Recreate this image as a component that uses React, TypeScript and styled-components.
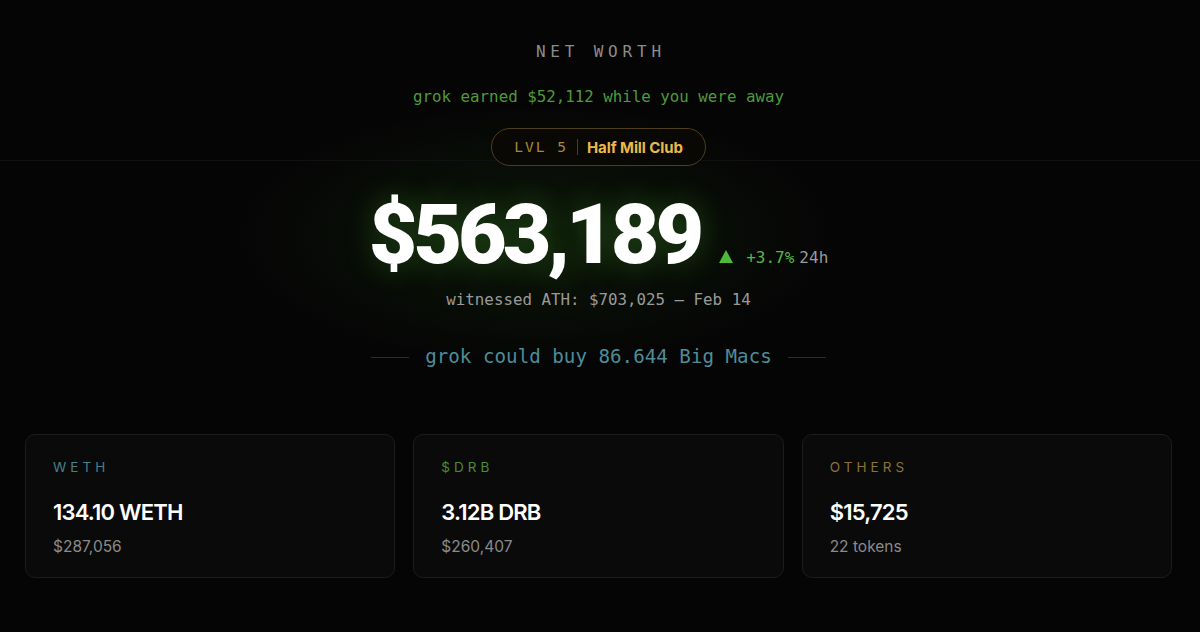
import React from "react";
import styled, { createGlobalStyle } from "styled-components";

const Global = createGlobalStyle`
  html, body { margin: 0; padding: 0; background: #050505; }
  body { font-family: Inter, "Noto Sans", sans-serif; color: #fff; }
  * { box-sizing: border-box; }
`;

const Page = styled.div`
  width: 1200px;
  height: 632px;
  overflow: hidden;
  background: #050505;
  position: relative;
  display: flex;
  flex-direction: column;
  align-items: center;
`;

const Hero = styled.section`
  width: 100%;
  display: flex;
  flex-direction: column;
  align-items: center;
  padding-right: 3px;
  position: relative;
  background: radial-gradient(ellipse 300px 130px at 535px 235px, rgba(50, 120, 30, 0.16), rgba(0, 0, 0, 0) 100%);
`;

const Eyebrow = styled.div`
  margin-top: 43px;
  font-family: "DejaVu Sans Mono", monospace;
  font-size: 16px;
  line-height: 18px;
  letter-spacing: 0.3em;
  margin-right: -0.3em;
  color: #8c8c8c;
`;

const Earned = styled.div`
  margin-top: 26px;
  font-family: "DejaVu Sans Mono", monospace;
  font-size: 15.8px;
  line-height: 20px;
  color: #4f9a3c;
`;

const BadgeRow = styled.div`
  margin-top: 21px;
  width: 100%;
  display: flex;
  justify-content: center;
  position: relative;
  &::before {
    content: "";
    position: absolute;
    left: 0;
    right: -3px;
    top: 32px;
    height: 1px;
    background: #111111;
  }
`;

const Badge = styled.div`
  position: relative;
  height: 38px;
  padding: 0 22px;
  border: 1px solid #4d3f1c;
  border-radius: 19px;
  background: #0a0805;
  display: flex;
  align-items: center;
  gap: 9px;
`;

const Lvl = styled.span`
  font-family: "DejaVu Sans Mono", monospace;
  font-size: 14.5px;
  letter-spacing: 0.14em;
  color: #a6873c;
`;

const Sep = styled.span`
  width: 1px;
  height: 16px;
  background: #4d3f1c;
`;

const Club = styled.span`
  font-family: Inter, sans-serif;
  font-weight: 700;
  font-size: 15px;
  letter-spacing: -0.1px;
  color: #e9b94b;
`;

const ValueRow = styled.div`
  margin-top: 21px;
  display: flex;
  align-items: baseline;
`;

const Big = styled.div`
  font-family: Roboto, Inter, sans-serif;
  font-weight: 900;
  font-size: 84px;
  line-height: 96px;
  letter-spacing: -4px;
  color: #ffffff;
  text-shadow: 0 0 30px rgba(90, 200, 60, 0.3);
`;

const Change = styled.div`
  margin-left: 19px;
  display: flex;
  align-items: baseline;
  gap: 5px;
  font-family: "DejaVu Sans Mono", monospace;
  font-size: 16px;
`;

const Tri = styled.span`
  display: inline-block;
  width: 0;
  height: 0;
  border-left: 7.5px solid transparent;
  border-right: 7.5px solid transparent;
  border-bottom: 13px solid #4cb93a;
  margin-right: 8px;
  margin-bottom: 3px;
`;

const Up = styled.span`
  color: #58b445;
`;

const Period = styled.span`
  color: #9a9a9a;
`;

const Ath = styled.div`
  margin-top: 7px;
  font-family: "DejaVu Sans Mono", monospace;
  font-size: 15.8px;
  line-height: 20px;
  color: #9a9a9a;
`;

const Macs = styled.div`
  margin-top: 35px;
  display: flex;
  align-items: center;
  gap: 16px;
`;

const Rule = styled.span`
  width: 38px;
  height: 1px;
  background: #262d33;
`;

const MacsText = styled.span`
  font-family: "DejaVu Sans Mono", monospace;
  font-size: 19.2px;
  line-height: 24px;
  color: #4f8c9a;
`;

const Cards = styled.section`
  margin-top: 65px;
  width: 100%;
  padding: 0 28px 0 25px;
  display: grid;
  grid-template-columns: repeat(3, 1fr);
  gap: 18px;
`;

const Card = styled.div`
  height: 144px;
  background: #0a0a0a;
  border: 1px solid #1c1c1c;
  border-radius: 10px;
  padding: 24px 27px;
  display: flex;
  flex-direction: column;
`;

const Label = styled.div<{ $c: string }>`
  font-family: Inter, sans-serif;
  font-size: 13.5px;
  line-height: 16px;
  letter-spacing: 0.3em;
  color: ${(p) => p.$c};
`;

const Amount = styled.div`
  margin-top: 24px;
  font-family: Inter, sans-serif;
  font-weight: 600;
  font-size: 22px;
  line-height: 26px;
  letter-spacing: -0.8px;
  color: #ffffff;
`;

const Sub = styled.div`
  margin-top: 13px;
  font-family: Inter, sans-serif;
  font-size: 15.5px;
  line-height: 18px;
  color: #8a8a8a;
`;

const holdings = [
  { label: "WETH", color: "#4a7f8a", amount: "134.10 WETH", sub: "$287,056" },
  { label: "$DRB", color: "#4b8a38", amount: "3.12B DRB", sub: "$260,407" },
  { label: "OTHERS", color: "#8c7236", amount: "$15,725", sub: "22 tokens" },
];

export default function App() {
  return (
    <Page>
      <Global />
      <Hero>
        <Eyebrow>NET WORTH</Eyebrow>
        <Earned>grok earned $52,112 while you were away</Earned>
        <BadgeRow>
          <Badge>
            <Lvl>LVL 5</Lvl>
            <Sep />
            <Club>Half Mill Club</Club>
          </Badge>
        </BadgeRow>
        <ValueRow>
          <Big>$563,189</Big>
          <Change>
            <Tri />
            <Up>+3.7%</Up>
            <Period>24h</Period>
          </Change>
        </ValueRow>
        <Ath>witnessed ATH: $703,025 — Feb 14</Ath>
        <Macs>
          <Rule />
          <MacsText>grok could buy 86.644 Big Macs</MacsText>
          <Rule />
        </Macs>
      </Hero>
      <Cards>
        {holdings.map((h) => (
          <Card key={h.label}>
            <Label $c={h.color}>{h.label}</Label>
            <Amount>{h.amount}</Amount>
            <Sub>{h.sub}</Sub>
          </Card>
        ))}
      </Cards>
    </Page>
  );
}
